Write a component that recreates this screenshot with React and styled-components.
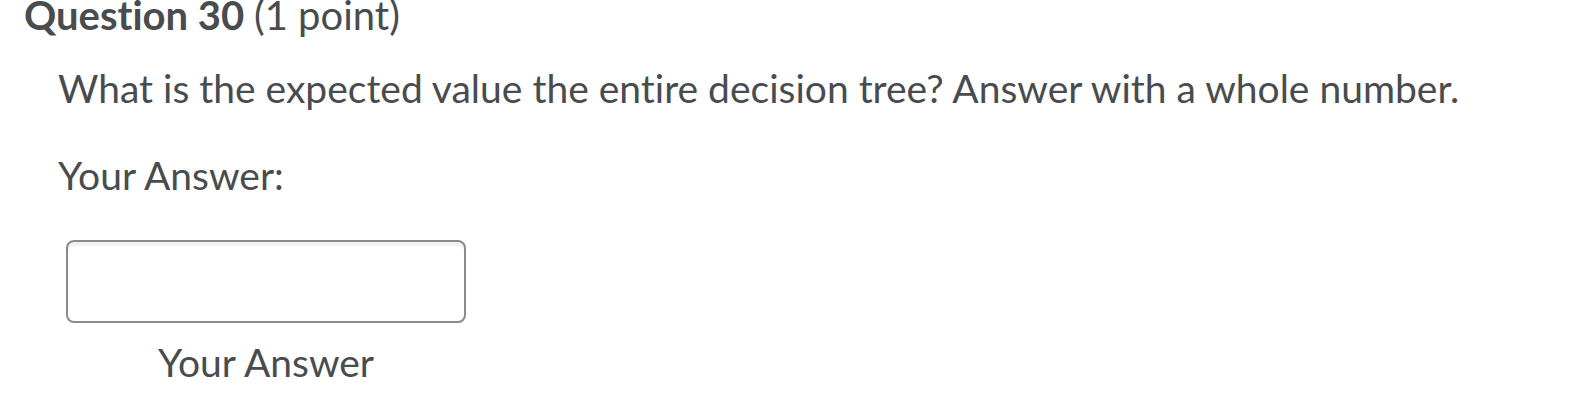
import React from 'react'
import styled, { createGlobalStyle } from 'styled-components'

const GlobalStyle = createGlobalStyle`
  body {
    margin: 0;
    background: #ffffff;
    font-family: Lato, "Noto Sans", sans-serif;
    color: #494c4e;
    font-variant-ligatures: none;
  }
`

const Page = styled.div`
  padding: 0 0 0 24px;
`

const Title = styled.h2`
  margin: 0;
  font-size: 40px;
  line-height: 31px;
  font-weight: 700;
  color: #494c4e;

  span {
    font-weight: 400;
  }
`

const Body = styled.div`
  padding-left: 34px;
`

const Prompt = styled.p`
  margin: 34px 0 0;
  font-size: 39px;
  line-height: 46px;
`

const Label = styled.label`
  display: block;
  margin-top: 41px;
  font-size: 39px;
  line-height: 46px;
`

const Field = styled.div`
  display: inline-flex;
  flex-direction: column;
  align-items: center;
  margin: 42px 0 0 8px;
`

const Input = styled.input`
  box-sizing: border-box;
  width: 400px;
  height: 83px;
  border: 2px solid #898b8d;
  border-radius: 8px;
  background: #ffffff;
  box-shadow: inset 0 4px 0 0 #f1f2f4;
  outline: none;
  font: inherit;
`

const Hint = styled.div`
  margin-top: 16px;
  font-size: 39px;
  line-height: 46px;
`

export default function App() {
  return (
    <>
      <GlobalStyle />
      <Page>
        <Title>
          Question 30 <span>(1 point)</span>
        </Title>
        <Body>
          <Prompt>What is the expected value the entire decision tree? Answer with a whole number.</Prompt>
          <Label htmlFor="answer">Your Answer:</Label>
          <Field>
            <Input id="answer" type="text" aria-label="Your Answer" />
            <Hint>Your Answer</Hint>
          </Field>
        </Body>
      </Page>
    </>
  )
}
